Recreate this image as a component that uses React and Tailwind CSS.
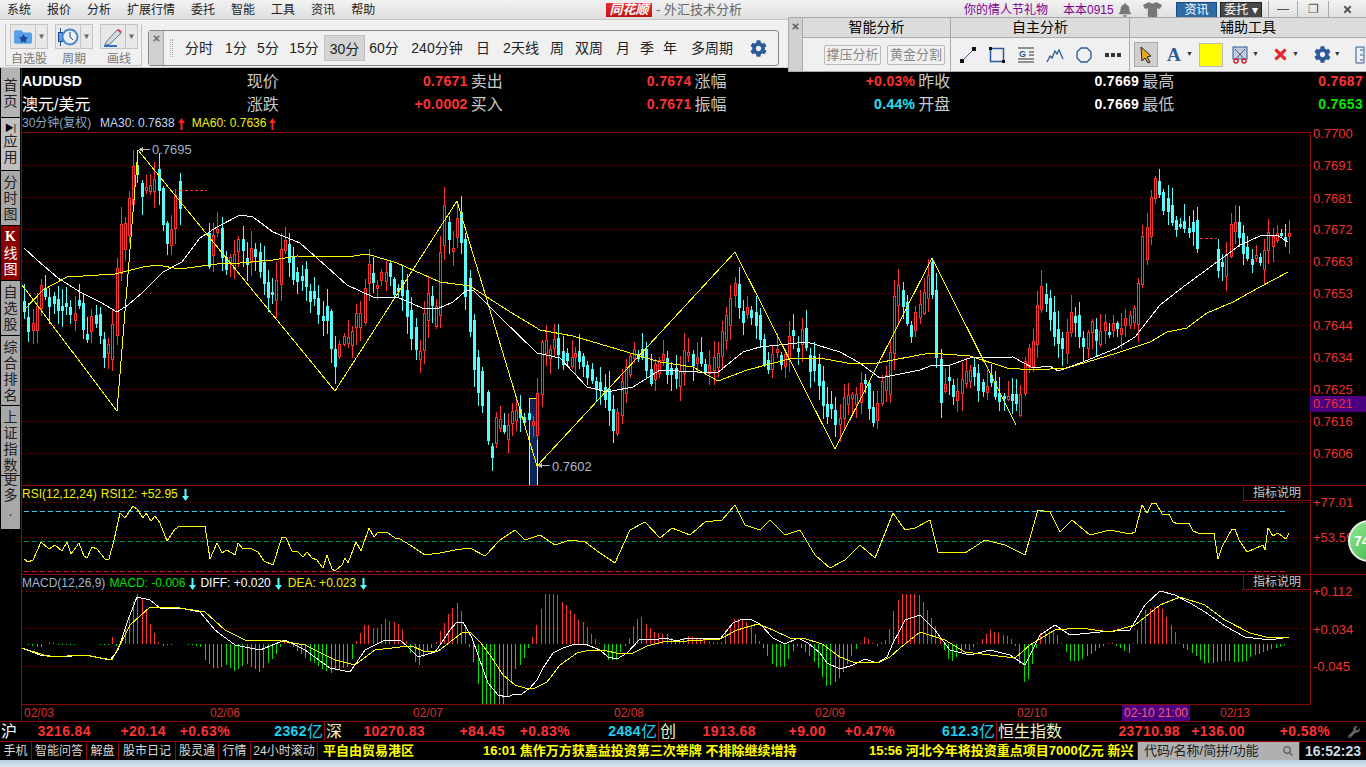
import { FaBell, FaCog, FaFolder, FaSearch, FaStar, FaTimes, FaTshirt, FaWrench } from 'react-icons/fa';

const UP = '#ff3232';
const DOWN = '#54fcfc';

// candle centres read off the chart, [zx, zy] in 3x crop coordinates
const SEG_A = [[73,530],[85,583],[100,590],[112,565],[124,500],[136,488],[148,517],[163,510],[175,525],[187,535],[199,525],[211,543],[226,560],[238,520],[250,560],[262,620],[274,580],[289,568],[301,585],[313,655],[325,655],[337,635],[352,515],[364,355],[376,318],[388,260],[400,165],[412,120],[427,180],[439,175],[451,175],[463,165],[478,150],[490,230],[502,310],[514,320],[526,245],[541,195],[628,360],[640,345],[652,300],[667,340],[679,400],[691,390],[703,395],[715,345]];
const SEG_B = [[10,165],[22,215],[34,195],[46,190],[60,215],[72,250],[85,300],[97,310],[109,300],[124,230],[136,165],[148,190],[160,235],[172,260],[186,265],[198,265],[210,320],[222,315],[235,350],[250,385],[262,370],[274,420],[286,505],[298,480],[312,450],[325,450],[337,445],[349,390],[361,390],[376,345],[388,250],[400,265],[412,290],[424,258],[438,260],[451,240],[463,290],[475,300],[487,295],[500,340],[514,403],[527,445],[539,495],[551,425],[565,350],[577,333],[589,378],[601,280],[613,105],[628,122],[640,178],[652,112],[664,112],[676,235],[690,345],[703,465],[715,555],[727,595],[743,680],[755,785],[767,720],[779,700],[791,715],[805,725],[817,680],[829,675],[841,670],[853,690],[868,680],[880,700],[892,672],[905,535],[917,470],[931,490],[943,460],[955,470],[968,505],[980,500],[995,515],[1006,495],[1018,500],[1030,515],[1042,545],[1056,555],[1068,585],[1081,590],[1094,610],[1106,630],[1120,690],[1132,698],[1145,625],[1157,570],[1169,525],[1181,490],[1193,500],[1207,490],[1219,510],[1232,560],[1246,545],[1258,530]];
const SEG_C = [[10,500],[22,530],[34,545],[49,550],[61,565],[73,515],[85,490],[100,510],[112,510],[124,505],[136,535],[148,537],[163,520],[175,510],[187,460],[199,413],[211,365],[226,297],[238,318],[250,382],[262,362],[274,372],[289,388],[301,412],[313,485],[325,525],[337,515],[352,480],[364,510],[376,510],[388,470],[400,430],[415,480],[427,440],[439,445],[451,520],[463,520],[478,555],[490,610],[502,662],[514,650],[526,682],[541,693],[553,652],[565,628],[577,618],[589,628],[604,608],[616,576],[628,618],[640,675],[652,665],[667,607],[679,577],[691,550],[703,403],[715,315],[730,326],[742,368],[754,424],[766,393],[781,362],[793,338],[805,290],[817,265],[829,403],[844,573],[856,592],[868,567],[880,603],[892,617],[907,588],[919,562],[931,556],[943,545],[955,577],[970,592],[982,597],[994,567],[1006,598],[1018,622],[1033,622],[1045,622],[1057,622],[1069,628],[1081,643],[1096,560],[1108,502],[1120,490],[1132,403],[1144,322],[1159,326],[1171,357],[1183,403],[1195,440],[1207,460],[1222,458],[1234,396],[1246,388],[1258,408]];
const SEG_D = [[250,533],[265,525],[277,485],[289,510],[301,518],[316,483],[328,505],[340,485],[352,483],[364,497],[376,470],[391,465],[403,450],[415,415],[427,285],[442,233],[454,155],[466,70],[478,70],[490,110],[505,120],[517,147],[529,180],[541,180],[553,180],[568,197],[580,187],[592,208],[655,285],[667,298],[679,300],[694,225],[706,185],[718,195],[730,235],[742,265],[757,290],[769,273],[781,285],[793,283],[805,228],[820,228],[832,215],[844,208],[856,222],[868,208]];

const CENTRES = [
  ...SEG_A.map(([x, y]) => [x / 3, 130 + y / 3]),
  ...SEG_B.map(([x, y]) => [240 + x / 3, 190 + y / 3]),
  ...SEG_C.map(([x, y]) => [660 + x / 3, 190 + y / 3]),
  ...SEG_D.map(([x, y]) => [1000 + x / 3, 165 + y / 3]),
];

function makeCandles() {
  let seed = 7;
  const rnd = () => {
    seed = (seed * 16807) % 2147483647;
    return seed / 2147483647;
  };
  return CENTRES.map(([x, y], i) => {
    const prev = CENTRES[Math.max(i - 1, 0)][1];
    const next = CENTRES[Math.min(i + 1, CENTRES.length - 1)][1];
    const half = Math.max(1.5, Math.abs(next - prev) * 0.33 + rnd() * 4);
    return {
      x: Math.round(x),
      top: Math.round(y - half),
      bottom: Math.round(y + half),
      high: Math.round(y - half - 2 - rnd() * 16),
      low: Math.round(y + half + 2 + rnd() * 16),
      up: next < prev || (next === prev && rnd() > 0.5),
    };
  });
}

const MA30 = [[24,248],[37,260],[58,278],[80,292],[100,302],[117,312],[128,305],[142,293],[153,282],[163,272],[182,262],[200,238],[217,227],[240,215],[253,217],[273,232],[300,243],[327,267],[347,285],[373,297],[397,297],[422,308],[437,309],[453,302],[467,290],[473,290],[500,317],[537,353],[560,358],[587,387],[607,392],[633,387],[660,370],[717,373],[743,352],[760,347],[807,342],[840,352],[860,363],[880,378],[920,370],[933,365],[950,365],[970,358],[1013,357],[1033,368],[1050,366],[1058,371],[1083,362],[1117,348],[1135,337],[1160,305],[1183,287],[1217,262],[1240,245],[1260,236],[1277,235],[1288,242]];
const MA60 = [[24,310],[43,290],[67,277],[115,274],[143,267],[157,265],[180,269],[217,264],[240,263],[273,260],[297,256],[347,257],[367,254],[397,263],[440,282],[470,286],[507,310],[540,330],[573,336],[627,352],[660,362],[693,367],[718,381],[747,370],[793,358],[820,358],[847,363],[877,363],[930,353],[970,356],[1007,368],[1033,370],[1067,368],[1117,353],[1150,342],[1167,332],[1187,328],[1207,313],[1233,302],[1260,287],[1288,272]];
const ZIGZAG = [[22,285],[117,411],[138,150],[335,391],[457,201],[537,466],[735,252],[835,449],[932,258],[1016,425]];

const RSI = [[24,559],[28,562],[33,560],[41,542],[49,549],[55,545],[62,551],[67,542],[71,554],[79,543],[84,556],[87,558],[92,547],[97,549],[105,559],[109,559],[114,540],[120,513],[125,518],[133,506],[137,509],[143,518],[146,513],[151,521],[155,516],[160,523],[167,541],[175,529],[180,526],[205,526],[210,559],[217,543],[222,553],[227,550],[235,555],[238,543],[243,549],[250,548],[258,552],[264,561],[273,565],[282,537],[286,538],[292,551],[297,551],[303,557],[307,552],[312,558],[317,560],[323,568],[327,555],[332,569],[335,571],[342,565],[345,558],[348,563],[356,542],[361,551],[369,528],[374,537],[378,532],[387,532],[395,538],[400,539],[410,545],[425,555],[440,553],[455,550],[470,548],[485,556],[500,540],[515,530],[525,540],[540,535],[555,545],[570,540],[585,542],[600,553],[615,563],[630,530],[645,522],[660,538],[672,528],[690,535],[705,522],[722,520],[735,505],[745,525],[760,530],[770,520],[785,535],[800,530],[815,555],[830,568],[845,560],[860,545],[875,558],[893,513],[905,530],[915,528],[930,520],[938,552],[965,553],[985,540],[1005,545],[1025,555],[1038,510],[1050,512],[1060,532],[1072,520],[1090,535],[1110,530],[1130,534],[1135,532],[1142,505],[1147,513],[1152,503],[1156,503],[1162,514],[1169,514],[1173,522],[1178,524],[1189,523],[1193,531],[1198,533],[1214,533],[1218,559],[1222,547],[1232,529],[1235,529],[1239,540],[1247,552],[1263,545],[1265,550],[1268,528],[1273,536],[1278,533],[1286,539],[1289,533]];

const DIFF = [[22,648],[40,655],[60,657],[85,655],[110,660],[118,650],[128,620],[137,597],[150,600],[160,608],[180,608],[200,612],[215,630],[235,645],[260,650],[285,640],[305,650],[330,668],[350,672],[365,650],[385,640],[400,640],[408,647],[418,657],[435,652],[442,642],[450,630],[457,622],[463,622],[472,638],[478,655],[488,683],[498,695],[507,697],[515,694],[522,694],[530,688],[537,680],[543,668],[553,653],[563,648],[575,644],[585,644],[600,650],[608,657],[617,659],[627,653],[640,639],[653,640],[665,638],[677,641],[687,638],[720,639],[733,623],[740,620],[750,619],[760,624],[773,638],[785,644],[798,638],[808,643],[820,653],[827,663],[840,669],[853,665],[865,659],[877,663],[887,657],[893,643],[900,630],[905,620],[920,615],[935,630],[950,650],[970,655],[990,650],[1010,655],[1025,665],[1040,635],[1055,625],[1070,635],[1100,632],[1130,630],[1145,605],[1160,591],[1175,595],[1190,603],[1205,612],[1225,626],[1245,637],[1270,640],[1289,637]];
const DEA = [[22,648],[50,657],[85,655],[112,660],[130,625],[150,607],[180,608],[205,612],[225,630],[245,640],[275,640],[305,645],[335,660],[355,665],[375,650],[400,647],[412,646],[423,651],[437,652],[450,642],[463,632],[470,632],[480,642],[490,655],[503,675],[515,685],[525,688],[535,688],[547,682],[560,665],[577,653],[590,650],[603,650],[620,654],[633,653],[647,646],[663,642],[687,641],[720,639],[737,630],[758,624],[773,630],[790,638],[803,638],[822,644],[840,657],[853,662],[880,662],[890,657],[900,648],[920,632],[945,640],[965,652],[990,655],[1015,658],[1030,645],[1055,630],[1080,628],[1110,632],[1135,625],[1160,605],[1180,597],[1205,605],[1225,620],[1250,633],[1270,638],[1289,637]];

function pts(list) {
  return list.map(([x, y]) => `${x},${y}`).join(' ');
}

function valueAt(list, x) {
  for (let i = 1; i < list.length; i++) {
    if (x <= list[i][0]) {
      const [x0, y0] = list[i - 1];
      const [x1, y1] = list[i];
      return y0 + ((x - x0) / (x1 - x0)) * (y1 - y0);
    }
  }
  return list[list.length - 1][1];
}

function GridLine({ y }) {
  return <line x1="22" x2="1310" y1={y + 0.5} y2={y + 0.5} stroke="#8a0a0a" strokeDasharray="1 3" />;
}

function AxisLabel({ y, children }) {
  return (
    <text x="1313" y={y + 5} fill="#f03030" fontSize="13" fontFamily="Liberation Sans">{children}</text>
  );
}

function Arrow({ color, down }) {
  return (
    <svg width="7" height="12" viewBox="0 0 7 12" className="inline-block">
      <path d={down ? 'M2.5 0h2v7h2.5l-3.5 5-3.5-5h2.500z' : 'M2.500 12h2v-7h2.500l-3.500-5-3.500 5h2.500z'} fill={color} />
    </svg>
  );
}

function MainPane() {
  const candles = makeCandles();
  return (
    <div className="relative h-[353px]">
      <svg width="1344" height="353" viewBox="22 132 1344 353" className="block overflow-visible" shapeRendering="crispEdges">
        <line x1="22" x2="1310" y1="132.5" y2="132.5" stroke="#8a0a0a" />
        <line x1="1310.500" x2="1310.500" y1="132" y2="485" stroke="#8a0a0a" />
        {[165, 197, 229, 261, 293, 325, 357, 389, 421, 453].map(y => <GridLine key={y} y={y} />)}
        <rect x="529" y="398" width="8" height="87" fill="#0c2456" stroke="#ffff00" />
        {candles.map(c => (
          <g key={c.x}>
            <line x1={c.x + 0.5} x2={c.x + 0.5} y1={c.high} y2={c.low} stroke={c.up ? UP : DOWN} />
            {c.up
              ? <rect x={c.x - 0.5} y={c.top + 0.5} width="2" height={c.bottom - c.top} fill="#000" stroke={UP} />
              : <rect x={c.x - 1} y={c.top} width="3" height={c.bottom - c.top} fill={DOWN} />}
          </g>
        ))}
        <path d="M180 190.500h27M1200 238.500h17" stroke={UP} strokeDasharray="3 2" />
        <polyline points={pts(MA30)} fill="none" stroke="#ffffff" />
        <polyline points={pts(MA60)} fill="none" stroke="#ffff00" />
        <polyline points={pts(ZIGZAG)} fill="none" stroke="#ffff00" />
        <path d="M140 149.500h10M540 465.500h10" stroke="#c0c0c0" />
        <path d="M139 149.500l4-3v6zM538 465.500l4-3v6z" fill="#c0c0c0" />
        <text x="152" y="154" fill="#9ab0c8" fontSize="13" fontFamily="Liberation Sans">0.7695</text>
        <text x="552" y="471" fill="#b0b8c8" fontSize="13" fontFamily="Liberation Sans">0.7602</text>
        {[[133, '0.7700'], [165, '0.7691'], [198, '0.7681'], [229, '0.7672'], [261, '0.7663'], [293, '0.7653'], [325, '0.7644'], [357, '0.7634'], [389, '0.7625'], [421, '0.7616'], [453, '0.7606']].map(([y, t]) => (
          <AxisLabel key={t} y={y}>{t}</AxisLabel>
        ))}
        <rect x="1310" y="396" width="56" height="16" fill="#4b0082" />
        <AxisLabel y={403}>0.7621</AxisLabel>
      </svg>
    </div>
  );
}

function ExplainTab() {
  return (
    <div className="absolute top-0 left-[1221px] w-[67px] h-[15px] border-l border-b border-[#8a0a0a] text-[#c8c8c8] text-[12px] leading-[15px] text-center">
      指标说明
    </div>
  );
}

function RsiPane() {
  return (
    <div className="relative h-[89px] border-t border-[#8a0a0a]">
      <svg width="1344" height="88" viewBox="22 486 1344 88" className="block" shapeRendering="crispEdges">
        <line x1="1310.500" x2="1310.500" y1="486" y2="574" stroke="#8a0a0a" />
        <GridLine y={502} />
        <GridLine y={537} />
        <path d="M24 511.500h1263" stroke="#3cc8e8" strokeDasharray="5 3" />
        <path d="M24 541.500h1263" stroke="#0a8a50" strokeDasharray="5 3" />
        <path d="M24 571.500h1263" stroke="#d02030" strokeDasharray="5 3" />
        <polyline points={pts(RSI)} fill="none" stroke="#ffff00" />
        <AxisLabel y={502}>+77.01</AxisLabel>
        <AxisLabel y={537}>+53.59</AxisLabel>
      </svg>
      <div className="absolute top-[1px] left-0 flex items-center gap-1 text-[12px] leading-[15px] text-[#f0f000]">
        <span>RSI(12,12,24)</span>
        <span>RSI12: +52.95</span>
        <Arrow color={DOWN} down />
      </div>
      <ExplainTab />
    </div>
  );
}

function MacdPane() {
  const bars = [];
  for (let x = 24; x < 1288; x += 4.2) {
    const h = Math.max(-60, Math.min(50, (valueAt(DEA, x) - valueAt(DIFF, x)) * 2.8));
    if (Math.abs(h) >= 0.5) bars.push({ x: Math.round(x), h });
  }
  return (
    <div className="relative h-[131px] border-t border-[#8a0a0a]">
      <svg width="1344" height="130" viewBox="22 575 1344 130" className="block" shapeRendering="crispEdges">
        <line x1="1310.500" x2="1310.500" y1="575" y2="705" stroke="#8a0a0a" />
        <GridLine y={591} />
        <GridLine y={628} />
        <GridLine y={666} />
        {bars.map(b => (
          <line key={b.x} x1={b.x + 0.5} x2={b.x + 0.5} y1="644" y2={644 - b.h} stroke={b.h > 0 ? UP : '#00e000'} />
        ))}
        <polyline points={pts(DIFF)} fill="none" stroke="#ffffff" />
        <polyline points={pts(DEA)} fill="none" stroke="#ffff00" />
        <AxisLabel y={591}>+0.112</AxisLabel>
        <AxisLabel y={629}>+0.034</AxisLabel>
        <AxisLabel y={666}>-0.045</AxisLabel>
        <line x1="22" x2="1310" y1="704.500" y2="704.500" stroke="#8a0a0a" />
      </svg>
      <div className="absolute top-[1px] left-0 flex items-center text-[12px] leading-[15px]">
        <span className="text-[#a0b4d0] mr-1">MACD(12,26,9)</span>
        <span className="text-[#00e000] mr-1">MACD: -0.006</span>
        <Arrow color={DOWN} down />
        <span className="text-white ml-[4px] mr-1">DIFF: +0.020</span>
        <Arrow color={DOWN} down />
        <span className="text-[#f0f000] ml-[6px] mr-1">DEA: +0.023</span>
        <Arrow color={DOWN} down />
      </div>
      <ExplainTab />
    </div>
  );
}

const DATES = [
  ['02/03', 'w-[187px] pl-[1px]'],
  ['02/06', 'w-[203px]'],
  ['02/07', 'w-[201px]'],
  ['02/08', 'w-[201px]'],
  ['02/09', 'w-[202px]'],
  ['02/10', 'w-[105px]'],
];

function DateAxis() {
  return (
    <div className="flex h-[16px] items-center text-[#d83030] text-[12px] pl-[1px]">
      {DATES.map(([t, w]) => <span key={t} className={w}>{t}</span>)}
      <span className="bg-[#4b0082] w-[68px] h-[16px] leading-[16px] text-center text-[#f06070] mr-[30px]">02-10 21:00</span>
      <span>02/13</span>
    </div>
  );
}

const QUOTES = [
  ['现价', '0.7671', 'text-[#ff3232]', '涨跌', '+0.0002', 'text-[#ff3232]'],
  ['卖出', '0.7674', 'text-[#ff3232]', '买入', '0.7671', 'text-[#ff3232]'],
  ['涨幅', '+0.03%', 'text-[#ff3232]', '振幅', '0.44%', 'text-[#20e0f8]'],
  ['昨收', '0.7669', 'text-white', '开盘', '0.7669', 'text-white'],
  ['最高', '0.7687', 'text-[#ff3232]', '最低', '0.7653', 'text-[#00e800]'],
];

function QuoteHeader() {
  return (
    <div className="h-[64px] pt-[2px]">
      <div className="flex">
        <div className="w-[225px] flex flex-col text-white">
          <span className="h-[23px] leading-[23px] text-[14px] font-bold">AUDUSD</span>
          <span className="h-[23px] leading-[23px] text-[16px]">澳元/美元</span>
        </div>
        {QUOTES.map(([l1, v1, c1, l2, v2, c2]) => (
          <div key={l1} className="w-[224px] flex flex-col text-[16px] text-[#c8c8c8]">
            <div className="h-[23px] leading-[23px] flex justify-between pr-[3px]">
              <span>{l1}</span>
              <span className={`font-bold text-[14px] tracking-[0.3px] ${c1}`}>{v1}</span>
            </div>
            <div className="h-[23px] leading-[23px] flex justify-between pr-[3px]">
              <span>{l2}</span>
              <span className={`font-bold text-[14px] tracking-[0.3px] ${c2}`}>{v2}</span>
            </div>
          </div>
        ))}
      </div>
      <div className="flex items-center h-[15px] text-[12px] leading-[15px]">
        <span className="text-[#8aa8c8] w-[78px]">30分钟(复权)</span>
        <span className="text-[#c0d8f8] mr-[3px]">MA30: 0.7638</span>
        <Arrow color="#ff2020" />
        <span className="text-[#f0f000] ml-[7px] mr-[3px]">MA60: 0.7636</span>
        <Arrow color="#ff2020" />
      </div>
    </div>
  );
}

const SIDE_TABS = [
  { t: '首页', h: 'h-[49px] bg-[#b4b4b4]' },
  { t: '应用', h: 'h-[52px] bg-[#c0c0c0]', icon: true },
  { t: '分时图', h: 'h-[54px] bg-[#a8a8a8]' },
  { t: 'K线图', h: 'h-[54px] bg-[#8a0000]', active: true },
  { t: '自选股', h: 'h-[54px] bg-[#a8a8a8]' },
  { t: '综合排名', h: 'h-[69px] bg-[#a8a8a8]' },
  { t: '上证指数', h: 'h-[69px] bg-[#a8a8a8]' },
  { t: '更多..', h: 'h-[53px] bg-[#a8a8a8]' },
];

function Sidebar() {
  return (
    <div className="w-[21px] flex flex-col pl-[1px] gap-[1px]">
      {SIDE_TABS.map(tab => (
        <div key={tab.t} className={`${tab.h} w-[19px] flex flex-col items-center justify-center text-[14px] leading-[16px] ${tab.active ? 'text-white' : 'text-[#222]'}`}>
          {tab.icon && <span className="text-[9px] leading-[10px] text-black">▶|</span>}
          {tab.t.split('').map((ch, i) => (
            <span key={i} className={ch === 'K' ? "font-bold font-['Liberation_Serif',serif]" : ''}>{ch}</span>
          ))}
        </div>
      ))}
    </div>
  );
}

const MENU = ['系统', '报价', '分析', '扩展行情', '委托', '智能', '工具', '资讯', '帮助'];

function MenuBar() {
  return (
    <div className="h-[20px] flex items-center bg-gradient-to-b from-[#f2f2f2] to-[#dedede] border-b border-[#c8c8c8] text-[12px] text-[#222]">
      <div className="flex gap-4 pl-[7px] w-[606px] shrink-0">
        {MENU.map(m => <span key={m}>{m}</span>)}
      </div>
      <span className="w-[46px] h-[14px] bg-gradient-to-b from-[#e83030] to-[#c01010] text-white text-[13px] leading-[14px] font-bold italic text-center shrink-0">同花顺</span>
      <span className="ml-[4px] w-[308px] shrink-0 text-[#666] text-[13px]">- 外汇技术分析</span>
      <span className="text-[#800090] w-[99px] shrink-0">你的情人节礼物</span>
      <span className="text-[#800090] w-[55px] shrink-0">本本0915</span>
      <FaBell className="text-[#777] w-[14px] h-[14px] shrink-0" />
      <FaTshirt className="text-[#777] w-[19px] h-[15px] ml-[11px] shrink-0" />
      <span className="ml-[14px] w-[41px] h-[16px] bg-[#2e6ca8] border border-[#1c4a80] text-white text-center leading-[14px] shrink-0">资讯</span>
      <span className="ml-[3px] w-[42px] h-[16px] bg-[#484848] border border-[#222] text-white text-center leading-[14px] shrink-0">委托 ▾</span>
      <span className="ml-[6px] w-[29px] h-[18px] border-l border-[#aaa] text-center leading-[16px] text-[#555] shrink-0">—</span>
      <span className="w-[31px] h-[18px] border-l border-[#aaa] text-center leading-[16px] text-[#555] shrink-0">❐</span>
      <span className="flex-1 h-[18px] border-l border-[#aaa] flex items-center justify-center text-[#555]"><FaTimes size={11} /></span>
    </div>
  );
}

function FolderIcon() {
  return (
    <span className="relative w-[20px] h-[18px] block">
      <FaFolder className="w-[20px] h-[18px] text-[#5aa0e8]" />
      <FaStar className="absolute left-[6px] top-[6px] w-[9px] h-[9px] text-[#1c4a98]" />
    </span>
  );
}

function PeriodIcon() {
  return (
    <svg width="22" height="20" viewBox="0 0 22 20">
      <path d="M3.500 1v18" stroke="#1c4a98" />
      <rect x="1.500" y="5.500" width="4" height="9" fill="#5aa0e8" stroke="#1c4a98" />
      <circle cx="13" cy="10" r="7.500" fill="#e8f0f8" stroke="#4a88c8" strokeWidth="2" />
      <path d="M13 5v5l3 3" fill="none" stroke="#444" />
    </svg>
  );
}

function PenIcon() {
  return (
    <svg width="22" height="20" viewBox="0 0 22 20">
      <path d="M4 15L15 3l4 3L8 17l-5 1z" fill="#d8d8d8" stroke="#5a7aa8" />
      <path d="M15 3l2-1 3 3-1 1z" fill="#e04040" />
      <path d="M2 19h13" stroke="#3070c0" strokeWidth="2" />
    </svg>
  );
}

function ToolGroup({ label, children }) {
  return (
    <div className="w-[38px] flex flex-col items-center">
      <div className="w-[38px] h-[25px] flex border border-[#c4c4c4] bg-[#e8e8e8]">
        <div className="w-[24px] flex items-center justify-center">{children}</div>
        <div className="flex-1 border-l border-[#c4c4c4] text-[#666] text-[8px] leading-[23px] text-center">▼</div>
      </div>
      <span className="text-[12px] leading-[20px] text-[#777] whitespace-nowrap">{label}</span>
    </div>
  );
}

const PERIODS = [
  ['分时', 'w-[42px]'], ['1分', 'w-[32px]'], ['5分', 'w-[32px]'], ['15分', 'w-[40px]'],
  ['30分', 'w-[41px]'], ['60分', 'w-[38px]'], ['240分钟', 'w-[68px]'], ['日', 'w-[24px]'],
  ['2天线', 'w-[52px]'], ['周', 'w-[20px]'], ['双周', 'w-[44px]'], ['月', 'w-[24px]'],
  ['季', 'w-[24px]'], ['年', 'w-[22px]'], ['多周期', 'w-[62px]'],
];

function Toolbar() {
  return (
    <div className="h-[48px] flex bg-[#f0f0f0] border-b border-[#c8c8c8]">
      <div className="ml-[5px] mt-[4px] w-[137px] h-[42px] flex gap-[7px] pl-[4px] border-l border-r border-b border-[#c4c4c4]">
        <ToolGroup label="自选股"><FolderIcon /></ToolGroup>
        <ToolGroup label="周期"><PeriodIcon /></ToolGroup>
        <ToolGroup label="画线"><PenIcon /></ToolGroup>
      </div>
      <div className="ml-[6px] mt-[10px] w-[631px] h-[36px] flex items-center border border-[#888] rounded-[3px] text-[14px] text-[#222]">
        <div className="w-[15px] h-full bg-[#d0d0d0] border-r border-[#aaa] flex justify-center pt-[3px] text-[#777]">
          <FaTimes size={9} />
        </div>
        <div className="ml-[6px] mr-[5px] h-[18px] w-[3px] border-x border-dotted border-[#aaa]" />
        {PERIODS.map(([t, w]) => (
          <span key={t} className={`${w} h-[26px] leading-[26px] text-center ${t === '30分' ? 'bg-[#d4d4d4] border border-[#c0c0c0] leading-[24px]' : ''}`}>{t}</span>
        ))}
        <FaCog className="ml-[7px] w-[17px] h-[17px] text-[#2a5a9a]" />
      </div>
    </div>
  );
}

function Caret() {
  return <span className="text-[#333] text-[7px] ml-[3px]">▼</span>;
}

function FloatingTools() {
  const blue = '#2a5a9a';
  return (
    <div className="absolute left-[788px] top-[17px] w-[578px] h-[55px] flex border-t border-l border-b border-[#aaa] bg-[#f0f0f0] text-[14px] text-black">
      <div className="w-[14px] bg-[#d0d0d0] border-r border-[#aaa] flex justify-center pt-[4px] text-[#666]">
        <FaTimes size={9} />
      </div>
      <div className="w-[148px] flex flex-col border-r border-[#aaa]">
        <div className="h-[20px] bg-[#dcdcdc] border-b border-[#aaa] text-center leading-[19px]">智能分析</div>
        <div className="flex-1 flex items-center gap-[6px] pl-[21px] text-[13px] text-[#888]">
          <span className="w-[57px] h-[20px] border border-[#bbb] rounded-[2px] text-center leading-[18px]">撑压分析</span>
          <span className="w-[58px] h-[20px] border border-[#bbb] rounded-[2px] text-center leading-[18px]">黄金分割</span>
        </div>
      </div>
      <div className="w-[179px] flex flex-col border-r border-[#aaa]">
        <div className="h-[20px] bg-[#dcdcdc] border-b border-[#aaa] text-center leading-[19px]">自主分析</div>
        <div className="flex-1 flex items-center gap-[11px] pl-[8px]">
          <svg width="18" height="18" viewBox="0 0 18 18"><path d="M3 15L15 3" stroke={blue} /><path d="M1 13h4v4H1zM13 1h4v4h-4z" fill="#111" /></svg>
          <svg width="18" height="18" viewBox="0 0 18 18"><rect x="2.500" y="2.500" width="13" height="13" fill="none" stroke={blue} strokeWidth="1.500" /><path d="M1 1h3v3H1zM14 14h3v3h-3z" fill="#111" /></svg>
          <svg width="18" height="18" viewBox="0 0 18 18"><path d="M1 2h16M12 6h5M12 9h5M1 13h16M1 16h16" stroke="#333" /><text x="2" y="11" fontSize="9" fontWeight="700" fill={blue}>G</text></svg>
          <svg width="18" height="18" viewBox="0 0 18 18"><path d="M1 16l3-6 2 2 3-7 2 3 2-4 4 9" fill="none" stroke={blue} strokeWidth="1.300" /></svg>
          <svg width="18" height="18" viewBox="0 0 18 18"><path d="M6 2h6l4 4v6l-4 4H6l-4-4V6z" fill="none" stroke={blue} strokeWidth="1.300" /></svg>
          <svg width="18" height="18" viewBox="0 0 18 18"><path d="M1 7h4v4H1zM7 7h4v4H7zM13 7h4v4h-4z" fill="#333" /></svg>
        </div>
      </div>
      <div className="flex-1 flex flex-col">
        <div className="h-[20px] bg-[#dcdcdc] border-b border-[#aaa] text-center leading-[19px]">辅助工具</div>
        <div className="flex-1 flex items-center pl-[4px]">
          <span className="w-[24px] h-[25px] bg-[#d0d0d0] border border-[#aaa] flex items-center justify-center">
            <svg width="14" height="18" viewBox="0 0 14 18"><path d="M2 1l10 9-4 1 3 5-2 1-3-5-3 3z" fill="#e8a820" stroke="#222" /></svg>
          </span>
          <span className="ml-[9px] w-[16px] text-[#2a5a9a] text-[19px] leading-[19px] font-bold font-['Liberation_Serif',serif]">A</span>
          <Caret />
          <span className="ml-[6px] w-[24px] h-[24px] bg-[#ffff00] border border-[#bbb]" />
          <svg className="ml-[9px]" width="17" height="18" viewBox="0 0 17 18"><rect x="1" y="1" width="14" height="12" fill="#c0cce0" stroke="#2a5a9a" /><path d="M3 3l10 11M13 3L3 14" stroke="#555" /><circle cx="4" cy="15" r="2" fill="none" stroke="#d02030" strokeWidth="1.500" /><circle cx="12" cy="15" r="2" fill="none" stroke="#d02030" strokeWidth="1.500" /></svg>
          <Caret />
          <FaTimes className="ml-[13px] w-[17px] h-[17px] text-[#e82828]" />
          <Caret />
          <FaCog className="ml-[15px] w-[17px] h-[17px] text-[#2a5a9a]" />
          <Caret />
          <svg className="ml-[14px]" width="10" height="18" viewBox="0 0 10 18"><path d="M1 1h8v16H1z" fill="none" stroke="#2a5a9a" /><path d="M5 4h3M5 9h3M5 14h3" stroke="#2a5a9a" /></svg>
        </div>
      </div>
    </div>
  );
}

function Num({ w, c = 'text-[#ff3232]', children }) {
  return <span className={`${w} ${c} shrink-0 text-right font-bold text-[14px] tracking-[0.4px]`}>{children}</span>;
}

function IndexBar() {
  const yi = 'text-[#20d0f0] text-[16px] w-[18px] shrink-0 border-r border-[#8a0a0a]';
  return (
    <div className="h-[20px] flex items-center border-t border-[#8a0a0a] leading-[19px] overflow-hidden">
      <span className="text-white text-[16px] w-[16px] shrink-0 ml-[1px]">沪</span>
      <Num w="w-[74px]">3216.84</Num>
      <Num w="w-[75px]">+20.14</Num>
      <Num w="w-[64px]">+0.63%</Num>
      <Num w="w-[77px]" c="text-[#20d0f0]">2362</Num>
      <span className={yi}>亿</span>
      <span className="text-[#f0f0c0] text-[16px] w-[16px] shrink-0 ml-[1px]">深</span>
      <Num w="w-[83px]">10270.83</Num>
      <Num w="w-[80px]">+84.45</Num>
      <Num w="w-[65px]">+0.83%</Num>
      <Num w="w-[71px]" c="text-[#20d0f0]">2484</Num>
      <span className={yi}>亿</span>
      <span className="text-[#f0f0c0] text-[16px] w-[16px] shrink-0 ml-[1px]">创</span>
      <Num w="w-[80px]">1913.68</Num>
      <Num w="w-[70px]">+9.00</Num>
      <Num w="w-[69px]">+0.47%</Num>
      <Num w="w-[84px]" c="text-[#20d0f0]">612.3</Num>
      <span className={yi}>亿</span>
      <span className="text-[#f0f0c0] text-[16px] w-[64px] shrink-0 ml-[1px]">恒生指数</span>
      <Num w="w-[118px]">23710.98</Num>
      <Num w="w-[65px]">+136.00</Num>
      <Num w="w-[85px]">+0.58%</Num>
      <FaWrench className="ml-[18px] w-[12px] h-[12px] text-[#666] shrink-0" />
    </div>
  );
}

const BOTTOM_TABS = [
  ['手机', 'w-[32px]'], ['智能问答', 'w-[55px]'], ['解盘', 'w-[32px]'], ['股市日记', 'w-[57px]'],
  ['股灵通', 'w-[43px]'], ['行情', 'w-[32px]'], ['24小时滚动', 'w-[67px]'],
];

function BottomBar() {
  return (
    <div className="h-[19px] flex items-center border-t border-[#8a0a0a] text-[12px] leading-[18px] text-[#d8d8d8]">
      {BOTTOM_TABS.map(([t, w]) => (
        <span key={t} className={`${w} h-full shrink-0 text-center border-r border-[#8a0a0a] whitespace-nowrap`}>{t}</span>
      ))}
      <div className="w-[819px] shrink-0 overflow-hidden flex text-[13px] font-bold text-[#ffff00] whitespace-nowrap pl-[5px]">
        <span className="w-[160px] shrink-0">平自由贸易港区</span>
        <span className="w-[386px] shrink-0">16:01 焦作万方获嘉益投资第三次举牌 不排除继续增持</span>
        <span>15:56 河北今年将投资重点项目7000亿元 新兴</span>
      </div>
      <div className="w-[163px] h-full shrink-0 bg-[#b0b0b0] flex items-center justify-between px-[6px] text-[13px] text-[#222] border-x border-[#8a0a0a]">
        <span>代码/名称/简拼/功能</span>
        <FaSearch className="w-[10px] h-[10px] text-[#666]" />
      </div>
      <span className="flex-1 text-center text-[14px] font-bold text-[#c8d8e8]">16:52:23</span>
    </div>
  );
}

export default function App() {
  return (
    <div className="relative w-[1366px] h-[767px] overflow-hidden bg-black font-['Liberation_Sans','Noto_Sans_CJK_SC',sans-serif]">
      <MenuBar />
      <Toolbar />
      <div className="flex h-[653px]">
        <Sidebar />
        <div className="w-[1345px] border-l border-[#8a0a0a]">
          <QuoteHeader />
          <MainPane />
          <RsiPane />
          <MacdPane />
          <DateAxis />
        </div>
      </div>
      <IndexBar />
      <BottomBar />
      <div className="h-[7px] bg-gradient-to-b from-[#b8cce0] to-[#dce8f4]" />
      <FloatingTools />
      <div className="absolute left-[1348px] top-[520px] w-[42px] h-[42px] rounded-full border-2 border-[#e8f0e8] bg-gradient-to-br from-[#90e890] to-[#30b040] text-white font-bold text-[14px] leading-[38px] pl-[4px]">
        74
      </div>
    </div>
  );
}
